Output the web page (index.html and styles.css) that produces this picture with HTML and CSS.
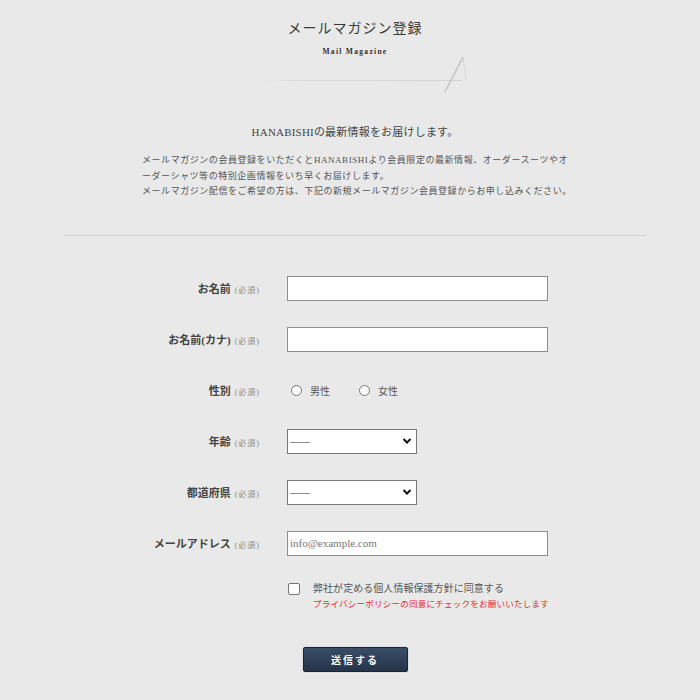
FILE: index.html
```html
<!DOCTYPE html>
<html lang="ja">
<head>
<meta charset="utf-8">
<title>メールマガジン登録</title>
<link rel="stylesheet" href="styles.css">
</head>
<body>
<div class="page">
  <header class="head">
    <h1 class="title">メールマガジン登録</h1>
    <p class="sub">Mail Magazine</p>
    <svg class="deco" width="230" height="40" viewBox="0 0 230 40">
      <defs>
        <linearGradient id="ln" gradientUnits="userSpaceOnUse" x1="22" y1="0" x2="222" y2="0">
          <stop offset="0" stop-color="#e9e9e9"/>
          <stop offset="0.2" stop-color="#dadada"/>
          <stop offset="1" stop-color="#d2d2d2"/>
        </linearGradient>
      </defs>
      <line x1="22" y1="23.5" x2="222" y2="23.5" stroke="url(#ln)" stroke-width="1"/>
      <path d="M223 0 L205 35" stroke="#c6c6c6" stroke-width="1.6" fill="none" stroke-linecap="round"/>
      <path d="M223 0 L226 23" stroke="#d4d4d4" stroke-width="0.8" fill="none"/>
    </svg>
  </header>

  <p class="lead">HANABISHIの最新情報をお届けします。</p>
  <p class="desc">メールマガジンの会員登録をいただくとHANABISHIより会員限定の最新情報、オーダースーツやオ<br>ーダーシャツ等の特別企画情報をいち早くお届けします。<br>メールマガジン配信をご希望の方は、下記の新規メールマガジン会員登録からお申し込みください。</p>

  <hr class="divider">

  <form class="form">
    <div class="row">
      <label class="label">お名前<span class="req">(必須)</span></label>
      <input class="text" type="text">
    </div>
    <div class="row">
      <label class="label">お名前(カナ)<span class="req">(必須)</span></label>
      <input class="text" type="text">
    </div>
    <div class="row">
      <span class="label">性別<span class="req">(必須)</span></span>
      <div class="radios">
        <label class="radio"><input type="radio" name="sex"><span>男性</span></label>
        <label class="radio"><input type="radio" name="sex"><span>女性</span></label>
      </div>
    </div>
    <div class="row">
      <label class="label">年齢<span class="req">(必須)</span></label>
      <select class="sel"><option>――</option></select>
    </div>
    <div class="row">
      <label class="label">都道府県<span class="req">(必須)</span></label>
      <select class="sel"><option>――</option></select>
    </div>
    <div class="row">
      <label class="label">メールアドレス<span class="req">(必須)</span></label>
      <input class="text" type="email" placeholder="info@example.com">
    </div>
    <div class="row agree-row">
      <span></span>
      <div class="agree">
        <label class="check"><input type="checkbox"><span>弊社が定める個人情報保護方針に同意する</span></label>
        <p class="warn">プライバシーポリシーの同意にチェックをお願いいたします</p>
      </div>
    </div>
    <div class="actions">
      <button type="button" class="submit">送信する</button>
    </div>
  </form>
</div>
</body>
</html>
```

FILE: styles.css
```css
* { box-sizing: border-box; }
html, body { margin: 0; padding: 0; }
body {
  background: #e9e9e9;
  color: #333;
  font-family: "Liberation Serif", "Noto Sans CJK JP", serif;
  width: 700px;
  height: 700px;
  overflow: hidden;
}
.page {
  width: 582px;
  margin-left: 64px;
  padding-top: 19px;
}
.head {
  display: flex;
  flex-direction: column;
  align-items: center;
}
.title {
  margin: 0;
  font-size: 14px;
  line-height: 20px;
  font-weight: normal;
  letter-spacing: 1px;
  color: #3a3a3a;
}
.sub {
  margin: 8px 0 0;
  font-size: 7.5px;
  line-height: 10px;
  font-weight: bold;
  letter-spacing: 1.3px;
  color: #333;
}
.deco {
  display: block;
  margin: 0;
}
.lead {
  margin: 27px 0 0;
  text-align: center;
  font-size: 11px;
  line-height: 16px;
  letter-spacing: 0.2px;
  color: #444;
}
.desc {
  width: 430px;
  margin: 13px auto 0;
  padding-left: 2px;
  font-size: 9px;
  line-height: 15.5px;
  letter-spacing: 0.55px;
  color: #555;
  white-space: nowrap;
}
.divider {
  margin: 35px 0 0;
  border: 0;
  border-top: 1px solid #d3d3d3;
  height: 0;
}
.form {
  margin-top: 40px;
  display: flex;
  flex-direction: column;
  gap: 26px;
}
.row {
  display: grid;
  grid-template-columns: 196px 1fr;
  column-gap: 27px;
  align-items: center;
  min-height: 25px;
}
.label {
  text-align: right;
  font-size: 11px;
  font-weight: bold;
  color: #444;
  white-space: nowrap;
}
.req {
  margin-left: 4px;
  font-size: 8px;
  font-weight: normal;
  letter-spacing: 1px;
  color: #888;
}
.text {
  width: 261px;
  height: 25px;
  margin: 0;
  border: 1px solid #8e8e8e;
  background: #fff;
  padding: 0 2px;
  font-family: "Liberation Serif", serif;
  font-size: 11px;
  color: #333;
  outline: none;
}
.text::placeholder { color: #777; }
.radios {
  display: flex;
  gap: 29px;
  padding-left: 4px;
}
.radio, .check {
  display: flex;
  align-items: center;
  font-size: 10px;
  color: #555;
}
.radio input {
  appearance: none;
  -webkit-appearance: none;
  width: 11px;
  height: 11px;
  margin: 0 8px 0 0;
  border: 1px solid #767676;
  border-radius: 50%;
  background: #fff;
}
.sel {
  appearance: none;
  -webkit-appearance: none;
  width: 130px;
  height: 25px;
  margin: 0;
  border: 1px solid #7a7a7a;
  border-radius: 0;
  padding: 0 2px;
  background: #fff url("data:image/svg+xml,%3Csvg xmlns='http://www.w3.org/2000/svg' width='10' height='8' viewBox='0 0 10 8'%3E%3Cpath d='M1.5 2 L5 5.5 L8.5 2' stroke='%23111' stroke-width='2' fill='none'/%3E%3C/svg%3E") no-repeat right 4px center;
  font-family: "Liberation Serif", "Noto Sans CJK JP", serif;
  font-size: 10px;
  color: #333;
}
.agree-row { align-items: start; }
.agree { padding-left: 1px; }
.check { font-size: 10px; line-height: 14px; letter-spacing: 0.05px; }
.check input {
  appearance: none;
  -webkit-appearance: none;
  width: 12px;
  height: 12px;
  margin: 0 13px 0 0;
  border: 1px solid #767676;
  border-radius: 2px;
  background: #fff;
}
.warn {
  margin: 1px 0 0 25px;
  font-size: 8.5px;
  line-height: 15px;
  letter-spacing: 0.25px;
  color: #e8292e;
  white-space: nowrap;
}
.actions {
  display: flex;
  justify-content: center;
  margin-top: 9px;
}
.submit {
  width: 105px;
  height: 25px;
  border: 1px solid #1a2434;
  border-radius: 2px;
  background: linear-gradient(#3a4d68, #243449);
  color: #fff;
  font-family: "Noto Sans CJK JP", sans-serif;
  font-size: 10px;
  font-weight: bold;
  letter-spacing: 2px;
  box-shadow: 0 0 1px rgba(0,0,0,0.4);
}
```
